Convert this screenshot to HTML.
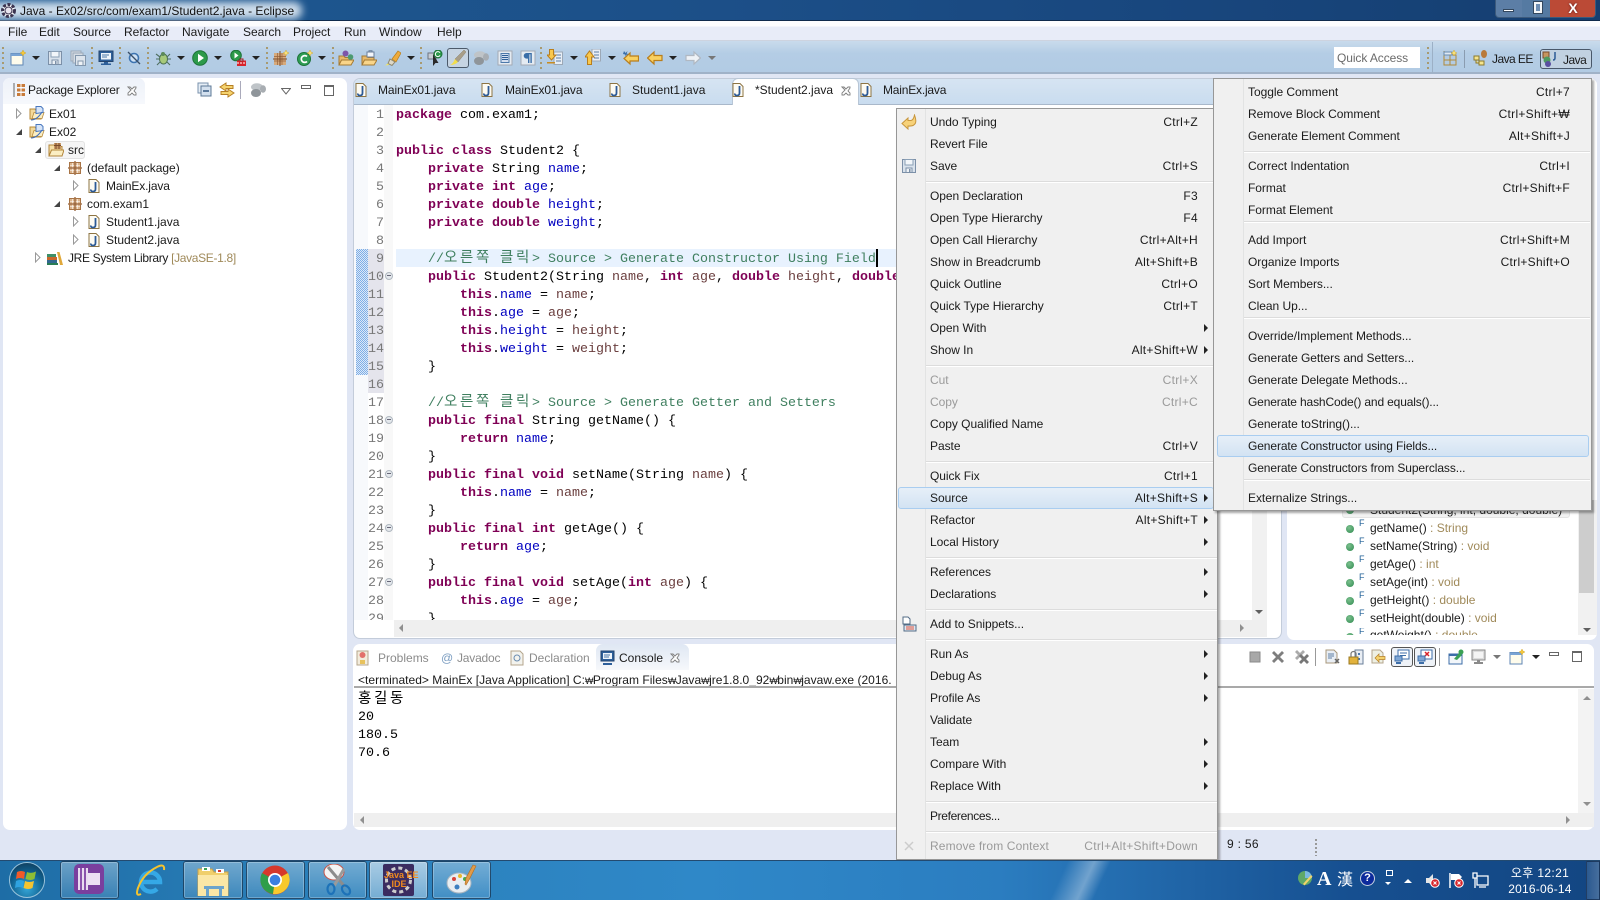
<!DOCTYPE html>
<html><head><meta charset="utf-8"><title>Java - Ex02/src/com/exam1/Student2.java - Eclipse</title>
<style>
html,body{margin:0;padding:0;width:1600px;height:900px;overflow:hidden;background:#e0e6f4}
body{position:relative;font:12px "Liberation Sans","Noto Sans CJK KR",sans-serif;color:#1a1a1a}
div,span,svg{box-sizing:border-box}
.a{position:absolute}
.t{position:absolute;white-space:nowrap;line-height:16px;height:16px}
svg.i{position:absolute;width:16px;height:16px;overflow:visible}
.dd{position:absolute;width:0;height:0;border-left:4px solid transparent;border-right:4px solid transparent;border-top:4px solid #222}
.ddg{border-top-color:#777}
.ds{position:absolute;width:2px;height:22px;top:47px;background:repeating-linear-gradient(#a89a70 0 2px,transparent 2px 5px)}
.m{position:absolute;height:22px;line-height:22px;white-space:nowrap}
.m1{left:896px;width:322px}.m2{left:1213px;width:379px}
.m span{position:absolute;left:34px;top:0;letter-spacing:-.04px}.m2 span{left:35px}
.m b{position:absolute;font-weight:normal;right:20px;top:0;letter-spacing:.28px}.m2 b{right:22px}
.m u{position:absolute;right:10px;top:7px;width:0;height:0;border-top:4px solid transparent;border-bottom:4px solid transparent;border-left:4px solid #222}
.off{color:#9a9a9a}
.hl{background:linear-gradient(#e6eff8,#d3e3f3);border:1px solid #a9cdf0;border-radius:3px;margin-top:0}
.sp{position:absolute;height:2px;background:linear-gradient(#dcdcdc 50%,#fff 50%)}
.code{position:absolute;left:396px;top:107px;width:520px;height:513px;overflow:hidden;font:13.33px/18px "Liberation Mono",monospace;color:#000}
.code div{height:18px;white-space:pre}
.num{position:absolute;left:364px;top:107px;width:20px;height:513px;overflow:hidden;font:13.33px/18px "Liberation Mono",monospace;color:#787878;text-align:right}
.num div{height:18px}
.w{color:#7f0055;font-weight:bold}.f{color:#0000c0}.l{color:#6a3e3e}.c{color:#3f7f5f}
.k{font-family:"Noto Sans CJK KR",sans-serif;font-size:14.5px;letter-spacing:2.66px;line-height:0}
.won{font-size:9px;letter-spacing:-.6px}
.fold{position:absolute;left:385px;width:8px;height:8px;border-radius:50%;background:#e4e8ec;border:1px solid #b0b8c0}
.fold:after{content:"";position:absolute;left:1px;top:2px;width:4px;height:1px;background:#667}
.tb{position:absolute;top:861px;height:38px;width:59px;border:1px solid rgba(15,45,75,.75);border-radius:3px;background:linear-gradient(rgba(255,255,255,.34),rgba(255,255,255,.1));box-shadow:inset 0 0 0 1px rgba(255,255,255,.25)}
.dot{position:absolute;left:1346px;width:8px;height:8px;border-radius:50%;background:radial-gradient(circle at 40% 35%,#7cc08e,#2f8a50)}
.F{position:absolute;left:1359px;color:#1f5f96;font-size:9px;line-height:10px}
.o{position:absolute;left:1370px;white-space:nowrap;line-height:16px}
.o em{font-style:normal;color:#a08a5a}
.g{color:#8b8b8b}
</style></head><body>
<svg width="0" height="0" style="position:absolute"><defs>
<symbol id="jf" viewBox="0 0 16 16"><path d="M3 1.500h7l3 3v10H3z" fill="#fdfbf3" stroke="#8d7443"/><path d="M9.500 4v7q0 2.500-2.500 2.500T5 11.500" fill="none" stroke="#2c5a96" stroke-width="1.800"/></symbol>
<symbol id="fo" viewBox="0 0 16 16"><path d="M1 4h5l1 1.500h5V14H1z" fill="#f3d99a" stroke="#b78a3a"/><path d="M3 13.500l2-6h10l-2 6z" fill="#fbeec3" stroke="#b78a3a" stroke-width=".8"/><path d="M7 1.500h5l2 2v4l-7 1z" fill="#d6e4f7" stroke="#4a78bf"/><path d="M2 15q6 0 11-8" fill="none" stroke="#3d6dbd" stroke-width="1.100"/></symbol>
<symbol id="pk" viewBox="0 0 16 16"><path d="M2 2h12v12H2z" fill="#dcb48c"/><path d="M2 5.500h12M2 10.500h12M5.500 2v12M10.500 2v12" stroke="#fff" stroke-width=".6"/><path d="M8 1v14M1 8h14" stroke="#96613a" stroke-width="1.300"/><path d="M2.500 2.500h11v11h-11z" fill="none" stroke="#a87446"/></symbol>
<symbol id="src" viewBox="0 0 16 16"><path d="M1 3h6l1 1.500h6V14H1z" fill="#f6dfa6" stroke="#b2853a"/><path d="M6 1h7v6H6z" fill="#c99a66"/><path d="M8 1v6M11 1v6M6 3.500h7" stroke="#7a4b2a"/><path d="M1 14l2.500-6H16l-2 6z" fill="#fbeec3" stroke="#b2853a"/></symbol>
<symbol id="jre" viewBox="0 0 16 16"><path d="M0 4h9v3H0z" fill="#3f8f68"/><path d="M0 7h10v3H0z" fill="#c9672c"/><path d="M0 10h10v3H0z" fill="#31688f"/><path d="M0 13h11v2H0z" fill="#2a7d55"/><path d="M10 2h2.500l3.500 13h-3z" fill="#e0a83a"/></symbol>
<symbol id="pe" viewBox="0 0 16 16"><path d="M3 1v14" stroke="#666"/><path d="M6 2h8v3H6zM6 6.500h8v3H6zM6 11h8v3H6z" fill="#c87b3a"/><path d="M10 2v12" stroke="#fff"/></symbol>
<symbol id="x" viewBox="0 0 12 12"><path d="M2 2l3 3-3 3v2h2l2-2 2 2h2V8L8 6l2-3V2H8L6 4 4 2z" fill="#fff" stroke="#7f7f7f" stroke-width=".9"/></symbol>
<symbol id="new" viewBox="0 0 16 16"><path d="M1 3.500h12V15H1z" fill="#fffcec" stroke="#5f86b4"/><path d="M1 3.500h12V6H1z" fill="#7aa4d4"/><path d="M13 0l1 2 2 1-2 1-1 2-1-2-2-1 2-1z" fill="#f5c83c" stroke="#c99a1c" stroke-width=".4"/></symbol>
<symbol id="save" viewBox="0 0 16 16"><path d="M1.500 1.500h13v13h-13z" fill="#d9e2ec" stroke="#7c90a8"/><path d="M4 1.500h8V7H4z" fill="#f2f6fa" stroke="#8ba0b6"/><path d="M5 10h6v4.500H5z" fill="#eef2f6" stroke="#7c90a8"/><path d="M8 11h1.500v3H8z" fill="#7c90a8"/></symbol>
<symbol id="saveall" viewBox="0 0 16 16"><path d="M1 1h10v10H1z" fill="#d5dce4" stroke="#9aa8b8"/><path d="M3 3h10v10H3z" fill="#d5dce4" stroke="#9aa8b8"/><path d="M5.500 5.500h10v10h-10z" fill="#dde4ec" stroke="#8397ad"/><path d="M8 11h5v4.500H8z" fill="#eef2f6" stroke="#8397ad"/></symbol>
<symbol id="mon" viewBox="0 0 16 16"><path d="M1 1h14v10.500H1z" fill="#2d5f9a" stroke="#23446e"/><path d="M3 3h10v6.500H3z" fill="#eef4fa"/><path d="M4 5h7M4 7h5" stroke="#4c78a8"/><path d="M6 12h4v1.500h3V15H3v-1.500h3z" fill="#2d5f9a"/></symbol>
<symbol id="skip" viewBox="0 0 16 16"><circle cx="8" cy="8" r="4.500" fill="#cfe2f5" stroke="#3e74b0" stroke-width="1.600"/><path d="M2 2l12 12" stroke="#3a4f68" stroke-width="1.300"/></symbol>
<symbol id="bug" viewBox="0 0 16 16"><ellipse cx="8.500" cy="9" rx="4" ry="5" fill="#a6c97a" stroke="#4a7050"/><circle cx="8" cy="4" r="2" fill="#5c8a5a"/><path d="M1 4l4 3M1 9h3.500M2 15l3-3M15 4l-3 3M16 9h-3.500M15 15l-3-3" stroke="#4f6f60" stroke-width="1.100"/></symbol>
<symbol id="run" viewBox="0 0 16 16"><circle cx="8" cy="8" r="7.300" fill="#2c9a4a" stroke="#1d7338"/><path d="M6 3.800l6 4.200-6 4.200z" fill="#fff"/></symbol>
<symbol id="runx" viewBox="0 0 16 16"><circle cx="6" cy="5.500" r="5.300" fill="#2c9a4a" stroke="#1d7338"/><path d="M4.500 2.500l4 3-4 3z" fill="#fff"/><path d="M7 10.500h9V16H7z" fill="#d8232a"/><path d="M10 9h3v2h-3z" fill="none" stroke="#a61a1f"/><path d="M7 13h9" stroke="#fff" stroke-dasharray="2 1"/></symbol>
<symbol id="npk" viewBox="0 0 16 16"><path d="M1 3h12v12H1z" fill="#d6aa7c"/><path d="M1 6.500h12M1 11h12M4.500 3v12M9 3v12" stroke="#96613a" stroke-width=".7"/><path d="M7 1v15M0 9h14" stroke="#7a4b2a"/><path d="M13 0l1 2 2 1-2 1-1 2-1-2-2-1 2-1z" fill="#f7e17c" stroke="#c99a1c" stroke-width=".4"/></symbol>
<symbol id="nc" viewBox="0 0 16 16"><circle cx="7" cy="9" r="6.500" fill="#2f9d54" stroke="#1d7338"/><path d="M10 6.500a3.400 3.400 0 1 0 0 5" fill="none" stroke="#fff" stroke-width="1.700"/><path d="M13 0l1 2 2 1-2 1-1 2-1-2-2-1 2-1z" fill="#f7e17c" stroke="#c99a1c" stroke-width=".4"/></symbol>
<symbol id="ot" viewBox="0 0 16 16"><path d="M1 6h5l1 1.500h6V15H1z" fill="#e8b868" stroke="#a47a34"/><path d="M1 15l2.500-5H16l-3 5z" fill="#f9d58a" stroke="#a47a34"/><circle cx="7.500" cy="3.500" r="3" fill="#7d55a8"/><circle cx="12.500" cy="7" r="2.800" fill="#4c9a70"/></symbol>
<symbol id="of" viewBox="0 0 16 16"><path d="M1 6h5l1 1.500h6V15H1z" fill="#e8b868" stroke="#a47a34"/><path d="M1 15l2.500-5H16l-3 5z" fill="#f9d58a" stroke="#a47a34"/><path d="M6 2h7v5H6z" fill="#f4f6fa" stroke="#6a7f9a"/><path d="M8 2V.800h3V2" fill="none" stroke="#6a7f9a"/></symbol>
<symbol id="srch" viewBox="0 0 16 16"><path d="M7 9l6-8 3 2-5 9z" fill="#eeab3c" stroke="#b97e1c" stroke-width=".7"/><path d="M5 9l5 3-3 3.500-4-2z" fill="#ddd8c8" stroke="#8f8870"/><path d="M0 15.500l3-2 1 1.500z" fill="#f4e85a"/></symbol>
<symbol id="pin" viewBox="0 0 16 16"><path d="M1 3h8v6H1z" fill="#c7ccd4" stroke="#6d7480"/><path d="M6 4v12l2.500-3h3z" fill="#2a2a2a"/><circle cx="11" cy="4" r="4" fill="#2c9a4a" stroke="#1d7338"/><path d="M13 2.800A2.500 2.500 0 1 0 13 5.400" fill="none" stroke="#fff"/></symbol>
<symbol id="br" viewBox="0 0 16 16"><path d="M14 0L5 9l3 3L16 2z" fill="#a89e88" stroke="#8a816c" stroke-width=".5"/><path d="M5 9l3 3q-3 3-8 3 3-1 5-6z" fill="#f2de4a"/></symbol>
<symbol id="gb" viewBox="0 0 16 16"><ellipse cx="7" cy="5" rx="6" ry="3.800" fill="#bfc4c8"/><ellipse cx="6" cy="11" rx="5" ry="4" fill="#8f959a"/><ellipse cx="13" cy="7" rx="3" ry="3.800" fill="#a8adb2"/></symbol>
<symbol id="bl" viewBox="0 0 16 16"><path d="M1 1h14v14H1z" fill="#e4ebf2" stroke="#a3aab4"/><path d="M4 3.500h8v9H4z" fill="#d4dff0" stroke="#4d79aa"/><path d="M5 5.500h6M5 7.500h6M5 9.500h6" stroke="#2f5f97"/></symbol>
<symbol id="pi" viewBox="0 0 16 16"><path d="M1 1h14v14H1z" fill="#e4ebf2" stroke="#a3aab4"/><path d="M10 3H6.500a2.800 2.800 0 0 0 0 5.600H8V13h1.400V4.200h1V13h1.400V3z" fill="#3a6ea8"/></symbol>
<symbol id="dn" viewBox="0 0 16 16"><path d="M7 3h8.500v12.500H7z" fill="#e8eef5" stroke="#9ca8b6"/><path d="M9 6h5M9 9h5M9 12h5" stroke="#5d7ea5"/><path d="M2.500.500h4V6H9L4.500 11 0 6h2.500z" fill="#f9c84c" stroke="#b97e1c"/><path d="M0 13h8v1.500H0z" fill="#c98c20"/></symbol>
<symbol id="up" viewBox="0 0 16 16"><path d="M7 0h8.500v12H7z" fill="#e8eef5" stroke="#9ca8b6"/><path d="M9 3h5M9 6h5M9 9h5" stroke="#5d7ea5"/><path d="M2.500 15.500V8H0l4.500-6L9 8H6.500v7.500z" fill="#f9c84c" stroke="#b97e1c"/></symbol>
<symbol id="lft" viewBox="0 0 16 16"><path d="M7 2v3.500h8v5H7V14L.5 8z" fill="#f9d060" stroke="#b97e1c" stroke-width="1.200"/></symbol>
<symbol id="lfs" viewBox="0 0 16 16"><path d="M7 3v3h8.500v5H7v3L1 8.500z" fill="#f9d060" stroke="#b97e1c" stroke-width="1.200"/><path d="M1 1l1.500 2L4.500 1l-.8 2.500 2 .8-2.400.4-.4 2-.8-2.200L0 4z" fill="#3a6ea8"/></symbol>
<symbol id="rgt" viewBox="0 0 16 16"><path d="M9 2v3.500H1v5h8V14l6.500-6z" fill="#eef2f6" stroke="#b0b8c2" stroke-width="1.200"/></symbol>
<symbol id="undo" viewBox="0 0 16 16"><path d="M1 9.500L7 4v2.500h3Q12.500 6 13.500 1q2 5 1 8-1.500 3.500-7.500 3v3z" fill="#f7d27a" stroke="#c8963c"/></symbol>
<symbol id="snip" viewBox="0 0 16 16"><path d="M2 1h5l2 2v5H2z" fill="#fff" stroke="#536c86"/><path d="M3 9h12v6H3z" fill="#dfe8f2" stroke="#536c86"/><path d="M5 11h8M5 13h8" stroke="#e0533f"/></symbol>
<symbol id="ql" viewBox="0 0 16 16"><path d="M2 1v14M2 5h12v10H2zM8 5v10M2 10h12" fill="none" stroke="#b08a3a"/><path d="M2 2h8v3H2z" fill="#dfe8f2" stroke="#6a8cb0"/><path d="M12 0l1 2 2 1-2 1-1 2-1-2-2-1 2-1z" fill="#f7e17c" stroke="#c99a1c" stroke-width=".4"/></symbol>
</defs></svg>

<!-- title bar -->
<div class="a" style="left:0;top:0;width:1600px;height:21px;background:linear-gradient(90deg,#1e5a92,#1c4f88 45%,#18467d 75%,#153e70);border-bottom:1px solid #0f2a4c"></div>
<div class="a" style="left:-10px;top:2px;width:312px;height:17px;background:rgba(226,236,246,.9);filter:blur(4px);border-radius:8px"></div>
<svg class="a" style="left:0;top:2px" width="17" height="17" viewBox="0 0 17 17"><circle cx="8.500" cy="8.500" r="6" fill="#fff" stroke="#3b3450" stroke-width="3" stroke-dasharray="3 1.500"/><circle cx="8.500" cy="8.500" r="3.500" fill="#e9e4ee" stroke="#3b3450"/></svg>
<div class="t" style="left:20px;top:3px;color:#111">Java - Ex02/src/com/exam1/Student2.java - Eclipse</div>
<div class="a" style="left:1495px;top:0;width:101px;height:18px;border:1px solid #3c5a7c;border-top:0;border-radius:0 0 4px 4px;background:linear-gradient(90deg,#5c7ea6 0 26px,#557aa2 26px 54px,#bb4a36 54px);overflow:hidden">
<div class="a" style="left:7px;top:9px;width:11px;height:3px;background:#fff;border:1px solid #33475e"></div>
<div class="a" style="left:38px;top:2px;width:8px;height:11px;background:#6f8fb4;border:2px solid #f4f6f8;outline:1px solid #33475e"></div>
<div class="a" style="left:54px;top:0;width:46px;height:17px;text-align:center;color:#fff;font:bold 14px/16px 'Liberation Sans',sans-serif;text-shadow:0 0 2px #511">X</div>
</div>

<!-- menu bar -->
<div class="a" style="left:0;top:21px;width:1600px;height:20px;background:linear-gradient(#fcfcfe 0 30%,#e8ecf8 30%);border-bottom:1px solid #cdd3df"></div>
<div class="t" style="left:8px;top:24px">File</div><div class="t" style="left:39px;top:24px">Edit</div><div class="t" style="left:73px;top:24px">Source</div><div class="t" style="left:124px;top:24px">Refactor</div><div class="t" style="left:182px;top:24px">Navigate</div><div class="t" style="left:243px;top:24px">Search</div><div class="t" style="left:293px;top:24px">Project</div><div class="t" style="left:344px;top:24px">Run</div><div class="t" style="left:379px;top:24px">Window</div><div class="t" style="left:437px;top:24px">Help</div>

<!-- toolbar -->
<div class="a" style="left:0;top:41px;width:1600px;height:33px;background:linear-gradient(#c9dbec,#b4cde5 40%,#b2cbe4);border-bottom:2px solid #a0b2c8"></div>
<div class="ds" style="left:2px"></div><div class="ds" style="left:91px"></div><div class="ds" style="left:119px"></div><div class="ds" style="left:147px"></div><div class="ds" style="left:266px"></div><div class="ds" style="left:332px"></div><div class="ds" style="left:420px"></div><div class="ds" style="left:540px"></div>
<svg class="i" style="left:10px;top:50px"><use href="#new"/></svg><div class="dd" style="left:32px;top:56px"></div>
<svg class="i" style="left:47px;top:50px"><use href="#save"/></svg>
<svg class="i" style="left:70px;top:50px"><use href="#saveall"/></svg>
<svg class="i" style="left:98px;top:50px"><use href="#mon"/></svg>
<svg class="i" style="left:126px;top:50px"><use href="#skip"/></svg>
<svg class="i" style="left:155px;top:50px"><use href="#bug"/></svg><div class="dd" style="left:177px;top:56px"></div>
<svg class="i" style="left:192px;top:50px"><use href="#run"/></svg><div class="dd" style="left:214px;top:56px"></div>
<svg class="i" style="left:230px;top:50px"><use href="#runx"/></svg><div class="dd" style="left:252px;top:56px"></div>
<svg class="i" style="left:273px;top:50px"><use href="#npk"/></svg>
<svg class="i" style="left:297px;top:50px"><use href="#nc"/></svg><div class="dd" style="left:318px;top:56px"></div>
<svg class="i" style="left:338px;top:50px"><use href="#ot"/></svg>
<svg class="i" style="left:361px;top:50px"><use href="#of"/></svg>
<svg class="i" style="left:385px;top:50px"><use href="#srch"/></svg><div class="dd" style="left:407px;top:56px"></div>
<svg class="i" style="left:427px;top:50px"><use href="#pin"/></svg>
<div class="a" style="left:447px;top:48px;width:22px;height:20px;background:#c6d4e2;border:1px solid #4c5a6a;border-radius:3px"></div>
<svg class="i" style="left:450px;top:50px"><use href="#br"/></svg>
<svg class="i" style="left:473px;top:50px"><use href="#gb"/></svg>
<svg class="i" style="left:497px;top:50px"><use href="#bl"/></svg>
<svg class="i" style="left:520px;top:50px"><use href="#pi"/></svg>
<svg class="i" style="left:547px;top:49px"><use href="#dn"/></svg><div class="dd" style="left:570px;top:56px"></div>
<svg class="i" style="left:585px;top:49px"><use href="#up"/></svg><div class="dd" style="left:608px;top:56px"></div>
<svg class="i" style="left:623px;top:50px"><use href="#lfs"/></svg>
<svg class="i" style="left:647px;top:50px"><use href="#lft"/></svg><div class="dd" style="left:669px;top:56px"></div>
<svg class="i" style="left:685px;top:50px"><use href="#rgt"/></svg><div class="dd ddg" style="left:708px;top:56px"></div>

<div class="a" style="left:1334px;top:47px;width:86px;height:21px;background:#fff"></div>
<div class="t" style="left:1337px;top:50px;color:#6b6b6b;letter-spacing:-.08px">Quick Access</div>
<div class="ds" style="left:1427px"></div><div class="a" style="left:1432px;top:42px;width:1px;height:31px;background:#9cb0c6"></div>
<svg class="i" style="left:1442px;top:50px"><use href="#ql"/></svg><div class="a" style="left:1464px;top:50px;width:1px;height:18px;background:#8a9cb0"></div>
<svg class="i" style="left:1473px;top:50px"><path d="M1 6h5v4H1zM6 11h5v4H6zM3 10v3h3" fill="#f5e48c" stroke="#8c7a2c"/><ellipse cx="11" cy="4" rx="3" ry="4" fill="#b9793a"/></svg>
<div class="t" style="left:1492px;top:51px;letter-spacing:-.55px">Java EE</div>
<div class="a" style="left:1540px;top:49px;width:52px;height:20px;background:#c1d1e1;border:1px solid #49586a;border-radius:3px"></div>
<svg class="i" style="left:1542px;top:51px"><path d="M1 1h6v6H1z" fill="#c7955f" stroke="#7a4b2a"/><circle cx="5" cy="9" r="3.500" fill="#4f9a60"/><circle cx="6" cy="13" r="3" fill="#5a4fa0"/><path d="M13 1v6q0 2-2 2" fill="none" stroke="#2c5a96" stroke-width="1.500"/></svg>
<div class="t" style="left:1563px;top:52px;letter-spacing:-.5px">Java</div>

<!-- package explorer -->
<div class="a" style="left:3px;top:78px;width:344px;height:752px;background:#fff;border-radius:7px"></div>
<div class="a" style="left:3px;top:78px;width:142px;height:26px;background:linear-gradient(#eef2f9,#f6f8fc);border-radius:7px 7px 0 0"></div>
<svg class="i" style="left:11px;top:82px"><use href="#pe"/></svg>
<div class="t" style="left:28px;top:82px;letter-spacing:-.2px">Package Explorer</div>
<svg class="a" style="left:126px;top:85px" width="12" height="12"><use href="#x"/></svg>
<svg class="i" style="left:197px;top:82px"><path d="M1 1h10v10H1z" fill="#e6eef6" stroke="#7a92ac"/><path d="M4 4h10v10H4z" fill="#d3e0ee" stroke="#5c7896"/><path d="M6 9h6" stroke="#2a4f78" stroke-width="1.400"/></svg>
<svg class="i" style="left:219px;top:82px"><path d="M7 1L1 5l6 4V6.500h7v-3H7zM9 7l6 4-6 4v-2.500H2v-3h7z" fill="#f5d36e" stroke="#b67f24"/></svg>
<div class="a" style="left:240px;top:81px;width:1px;height:18px;background:#aab"></div>
<svg class="i" style="left:250px;top:82px"><use href="#gb"/></svg>
<div class="a" style="left:281px;top:84px;width:10px;height:6px;"><svg width="10" height="7"><path d="M.5.500h9L5 6z" fill="#fff" stroke="#666"/></svg></div>
<div class="a" style="left:301px;top:85px;width:10px;height:4px;border:1px solid #666;background:#fff"></div>
<div class="a" style="left:324px;top:85px;width:10px;height:11px;border:1px solid #666;border-top-width:2px;background:#fff"></div>

<svg class="a" style="left:15px;top:108px" width="8" height="11"><path d="M1.500 1v9L6 5.500z" fill="#fff" stroke="#999"/></svg>
<svg class="i" style="left:29px;top:105px"><use href="#fo"/></svg><div class="t" style="left:49px;top:106px">Ex01</div>
<svg class="a" style="left:15px;top:128px" width="8" height="8"><path d="M7 1v6H1z" fill="#444"/></svg>
<svg class="i" style="left:29px;top:123px"><use href="#fo"/></svg><div class="t" style="left:49px;top:124px">Ex02</div>
<svg class="a" style="left:34px;top:146px" width="8" height="8"><path d="M7 1v6H1z" fill="#444"/></svg>
<div class="a" style="left:45px;top:141px;width:40px;height:18px;background:#f5f5f5;border:1px solid #e2e2e2;border-radius:3px"></div>
<svg class="i" style="left:48px;top:142px"><use href="#src"/></svg><div class="t" style="left:68px;top:142px">src</div>
<svg class="a" style="left:53px;top:164px" width="8" height="8"><path d="M7 1v6H1z" fill="#444"/></svg>
<svg class="i" style="left:67px;top:160px"><use href="#pk"/></svg><div class="t" style="left:87px;top:160px">(default package)</div>
<svg class="a" style="left:72px;top:180px" width="8" height="11"><path d="M1.500 1v9L6 5.500z" fill="#fff" stroke="#999"/></svg>
<svg class="i" style="left:86px;top:178px"><use href="#jf"/></svg><div class="t" style="left:106px;top:178px;letter-spacing:-.15px">MainEx.java</div>
<svg class="a" style="left:53px;top:200px" width="8" height="8"><path d="M7 1v6H1z" fill="#444"/></svg>
<svg class="i" style="left:67px;top:196px"><use href="#pk"/></svg><div class="t" style="left:87px;top:196px">com.exam1</div>
<svg class="a" style="left:72px;top:216px" width="8" height="11"><path d="M1.500 1v9L6 5.500z" fill="#fff" stroke="#999"/></svg>
<svg class="i" style="left:86px;top:214px"><use href="#jf"/></svg><div class="t" style="left:106px;top:214px">Student1.java</div>
<svg class="a" style="left:72px;top:234px" width="8" height="11"><path d="M1.500 1v9L6 5.500z" fill="#fff" stroke="#999"/></svg>
<svg class="i" style="left:86px;top:232px"><use href="#jf"/></svg><div class="t" style="left:106px;top:232px">Student2.java</div>
<svg class="a" style="left:34px;top:252px" width="8" height="11"><path d="M1.500 1v9L6 5.500z" fill="#fff" stroke="#999"/></svg>
<svg class="i" style="left:47px;top:250px"><use href="#jre"/></svg><div class="t" style="left:68px;top:250px;letter-spacing:-.33px">JRE System Library <span style="color:#a08a5a">[JavaSE-1.8]</span></div>

<!-- editor -->
<div class="a" style="left:353px;top:78px;width:929px;height:561px;background:#fff;border:1px solid #c3ccda;border-radius:7px;overflow:hidden">
<div class="a" style="left:0;top:0;width:929px;height:26px;background:linear-gradient(#d6e4f2,#c9dcef);border-bottom:1px solid #a9b8ca"></div>
</div>
<div class="a" style="left:732px;top:78px;width:127px;height:27px;background:#fff;border-radius:6px 6px 0 0;border:1px solid #b8c6d6;border-bottom:0"></div>
<svg class="i" style="left:353px;top:82px"><use href="#jf"/></svg><div class="t" style="left:378px;top:82px;letter-spacing:-.1px">MainEx01.java</div>
<svg class="i" style="left:479px;top:82px"><use href="#jf"/></svg><div class="t" style="left:505px;top:82px;letter-spacing:-.1px">MainEx01.java</div>
<svg class="i" style="left:607px;top:82px"><use href="#jf"/></svg><div class="t" style="left:632px;top:82px">Student1.java</div>
<svg class="i" style="left:730px;top:82px"><use href="#jf"/></svg><div class="t" style="left:755px;top:82px">*Student2.java</div>
<svg class="a" style="left:840px;top:85px" width="12" height="12"><use href="#x"/></svg>
<svg class="i" style="left:858px;top:82px"><use href="#jf"/></svg><div class="t" style="left:883px;top:82px;letter-spacing:-.2px">MainEx.java</div>

<div class="a" style="left:354px;top:105px;width:14px;height:515px;background:#f7f9fc"></div>
<div class="a" style="left:384px;top:105px;width:9px;height:515px;background:#f8f8f8"></div>
<div class="a" style="left:356px;top:249px;width:12px;height:126px;background:repeating-conic-gradient(#7eaee6 0 25%,#dbe8f8 0 50%) 0 0/2px 2px"></div>
<div class="a" style="left:368px;top:249px;width:16px;height:144px;background:#e4e4ec"></div>
<div class="a" style="left:396px;top:249px;width:520px;height:18px;background:#e8f2fe"></div>

<div class="num"><div>1</div><div>2</div><div>3</div><div>4</div><div>5</div><div>6</div><div>7</div><div>8</div><div>9</div><div>10</div><div>11</div><div>12</div><div>13</div><div>14</div><div>15</div><div>16</div><div>17</div><div>18</div><div>19</div><div>20</div><div>21</div><div>22</div><div>23</div><div>24</div><div>25</div><div>26</div><div>27</div><div>28</div><div>29</div></div>
<div class="fold" style="top:272px"></div><div class="fold" style="top:416px"></div><div class="fold" style="top:470px"></div><div class="fold" style="top:524px"></div><div class="fold" style="top:578px"></div>

<div class="code">
<div><span class="w">package</span> com.exam1;</div>
<div> </div>
<div><span class="w">public</span> <span class="w">class</span> Student2 {</div>
<div>    <span class="w">private</span> String <span class="f">name</span>;</div>
<div>    <span class="w">private</span> <span class="w">int</span> <span class="f">age</span>;</div>
<div>    <span class="w">private</span> <span class="w">double</span> <span class="f">height</span>;</div>
<div>    <span class="w">private</span> <span class="w">double</span> <span class="f">weight</span>;</div>
<div> </div>
<div>    <span class="c">//<span class="k">오른쪽</span> <span class="k">클릭</span>&gt; Source &gt; Generate Constructor Using Field</span></div>
<div>    <span class="w">public</span> Student2(String <span class="l">name</span>, <span class="w">int</span> <span class="l">age</span>, <span class="w">double</span> <span class="l">height</span>, <span class="w">double</span> <span class="l">weight</span>) {</div>
<div>        <span class="w">this</span>.<span class="f">name</span> = <span class="l">name</span>;</div>
<div>        <span class="w">this</span>.<span class="f">age</span> = <span class="l">age</span>;</div>
<div>        <span class="w">this</span>.<span class="f">height</span> = <span class="l">height</span>;</div>
<div>        <span class="w">this</span>.<span class="f">weight</span> = <span class="l">weight</span>;</div>
<div>    }</div>
<div> </div>
<div>    <span class="c">//<span class="k">오른쪽</span> <span class="k">클릭</span>&gt; Source &gt; Generate Getter and Setters</span></div>
<div>    <span class="w">public</span> <span class="w">final</span> String getName() {</div>
<div>        <span class="w">return</span> <span class="f">name</span>;</div>
<div>    }</div>
<div>    <span class="w">public</span> <span class="w">final</span> <span class="w">void</span> setName(String <span class="l">name</span>) {</div>
<div>        <span class="w">this</span>.<span class="f">name</span> = <span class="l">name</span>;</div>
<div>    }</div>
<div>    <span class="w">public</span> <span class="w">final</span> <span class="w">int</span> getAge() {</div>
<div>        <span class="w">return</span> <span class="f">age</span>;</div>
<div>    }</div>
<div>    <span class="w">public</span> <span class="w">final</span> <span class="w">void</span> setAge(<span class="w">int</span> <span class="l">age</span>) {</div>
<div>        <span class="w">this</span>.<span class="f">age</span> = <span class="l">age</span>;</div>
<div>    }</div>
</div>
<div class="a" style="left:876px;top:249px;width:2px;height:18px;background:#000"></div>

<!-- editor scrollbars -->
<div class="a" style="left:1252px;top:105px;width:15px;height:515px;background:#f1f1f1"></div>
<div class="a" style="left:1255px;top:610px;width:0;height:0;border-left:4px solid transparent;border-right:4px solid transparent;border-top:4px solid #606060"></div>
<div class="a" style="left:394px;top:620px;width:873px;height:17px;background:#efefef"></div>
<div class="a" style="left:399px;top:624px;width:0;height:0;border-top:4px solid transparent;border-bottom:4px solid transparent;border-right:4px solid #909090"></div>
<div class="a" style="left:1240px;top:624px;width:0;height:0;border-top:4px solid transparent;border-bottom:4px solid transparent;border-left:4px solid #909090"></div>

<!-- outline -->
<div class="a" style="left:1287px;top:78px;width:310px;height:562px;background:#fff;border-radius:7px"></div>
<div class="a" style="left:1342px;top:500px;width:228px;height:18px;background:#f2f2f2;border:1px solid #e4e4e4;border-radius:3px"></div>
<div class="dot" style="top:506px"></div><div class="o" style="top:502px">Student2(String, int, double, double)</div>
<div class="dot" style="top:525px"></div><div class="F" style="top:518px">F</div><div class="o" style="top:520px">getName() <em>: String</em></div>
<div class="dot" style="top:543px"></div><div class="F" style="top:536px">F</div><div class="o" style="top:538px">setName(String) <em>: void</em></div>
<div class="dot" style="top:561px"></div><div class="F" style="top:554px">F</div><div class="o" style="top:556px">getAge() <em>: int</em></div>
<div class="dot" style="top:579px"></div><div class="F" style="top:572px">F</div><div class="o" style="top:574px">setAge(int) <em>: void</em></div>
<div class="dot" style="top:597px"></div><div class="F" style="top:590px">F</div><div class="o" style="top:592px">getHeight() <em>: double</em></div>
<div class="dot" style="top:615px"></div><div class="F" style="top:608px">F</div><div class="o" style="top:610px">setHeight(double) <em>: void</em></div>
<div class="a" style="left:1340px;top:628px;width:230px;height:7px;overflow:hidden"><div class="dot" style="left:6px;top:5px"></div><div class="F" style="left:19px;top:-2px">F</div><div class="o" style="left:30px;top:-1px;">getWeight() <em>: double</em></div></div>
<div class="a" style="left:1578px;top:500px;width:19px;height:135px;background:#f1f1f1"></div>
<div class="a" style="left:1579px;top:500px;width:15px;height:93px;background:#cdcdcd"></div>
<div class="a" style="left:1583px;top:628px;width:0;height:0;border-left:4px solid transparent;border-right:4px solid transparent;border-top:4px solid #606060"></div>

<!-- console -->
<div class="a" style="left:353px;top:644px;width:1241px;height:186px;background:#fff;border-radius:7px"></div>
<div class="a" style="left:596px;top:644px;width:93px;height:26px;background:linear-gradient(#dfe7f3,#f6f8fb);border-radius:7px 7px 0 0"></div>
<svg class="i" style="left:355px;top:650px"><path d="M2 1h11v14H2z" fill="#f3ecdc" stroke="#b4a68c"/><circle cx="7.500" cy="5" r="3" fill="#e2706a"/><path d="M5 10h5v4H5z" fill="#e8c25c"/></svg>
<div class="t g" style="left:378px;top:650px">Problems</div>
<div class="t" style="left:441px;top:650px;color:#7a9cc0">@</div>
<div class="t g" style="left:457px;top:650px;letter-spacing:-.2px">Javadoc</div>
<svg class="i" style="left:509px;top:650px"><path d="M2 1h9l3 3v11H2z" fill="#f3f3ee" stroke="#b4a68c"/><circle cx="8" cy="8" r="3" fill="none" stroke="#6a8cb0"/></svg>
<div class="t g" style="left:529px;top:650px">Declaration</div>
<svg class="i" style="left:600px;top:650px"><path d="M1 1h13v10H1z" fill="#2d5f9a" stroke="#23446e"/><path d="M3 3h9v6H3z" fill="#eef4fa"/><path d="M4 5h6M4 7h5" stroke="#4c78a8"/><path d="M3 13h9v2H3z" fill="#2d5f9a"/></svg>
<div class="t" style="left:619px;top:650px">Console</div>
<svg class="a" style="left:669px;top:652px" width="12" height="12"><use href="#x"/></svg>

<div class="t" style="left:358px;top:672px;letter-spacing:.02px">&lt;terminated&gt; MainEx [Java Application] C:<span class="won">₩</span>Program Files<span class="won">₩</span>Java<span class="won">₩</span>jre1.8.0_92<span class="won">₩</span>bin<span class="won">₩</span>javaw.exe (2016.</div>
<div class="a" style="left:354px;top:686px;width:1240px;height:2px;background:#a9a9a9"></div>
<div class="a" style="left:358px;top:689px;font:13.33px/18px 'Liberation Mono',monospace;white-space:pre;color:#000"><div style="height:18px;position:relative;top:3px"><span class="k">홍길동</span></div><div style="height:18px;margin-top:2px">20</div><div style="height:18px">180.5</div><div style="height:18px">70.6</div></div>

<!-- console toolbar -->
<svg class="i" style="left:1247px;top:649px"><path d="M3 3h10v10H3z" fill="#a8a8a8" stroke="#8a8a8a"/></svg>
<svg class="i" style="left:1270px;top:649px"><path d="M2 4l2-2 4 4 4-4 2 2-4 4 4 4-2 2-4-4-4 4-2-2 4-4z" fill="#7e7e7e"/></svg>
<svg class="i" style="left:1294px;top:649px"><path d="M1 3l2-2 3 3 3-3 2 2-3 3 3 3-2 2-3-3-3 3-2-2 3-3z" fill="#ababab"/><path d="M5 7l2-2 3 3 3-3 2 2-3 3 3 3-2 2-3-3-3 3-2-2 3-3z" fill="#777"/></svg>
<div class="a" style="left:1315px;top:648px;width:1px;height:18px;background:#999"></div>
<svg class="i" style="left:1324px;top:649px"><path d="M2 1h8l3 3v10H2z" fill="#e9eef4" stroke="#a8977a"/><path d="M4 5h6M4 7h6M4 9h4" stroke="#5d7ea5"/><path d="M11 10l4 4m0-4l-4 4" stroke="#666" stroke-width="1.500"/></svg>
<svg class="i" style="left:1348px;top:649px"><path d="M7 1h8v14H7z" fill="#e9eef4" stroke="#6a7f9a"/><path d="M10 4h2v2h-2zM10 9h2v2h-2z" fill="#4a78b0"/><path d="M1 8h9v7H1z" fill="#e2b23c" stroke="#9b7a20"/><path d="M3 8V5a2.500 2.500 0 0 1 5 0v3" fill="none" stroke="#777" stroke-width="1.200"/></svg>
<svg class="i" style="left:1370px;top:649px"><path d="M2 1h8l3 3v10H2z" fill="#eef0e4" stroke="#b4a68c"/><path d="M5 9l4-4v2.500h6v3H9V13z" fill="#f5d36e" stroke="#b67f24" stroke-width=".7"/></svg>
<div class="a" style="left:1391px;top:647px;width:22px;height:20px;background:#eef2f7;border:1px solid #555;border-radius:3px"></div>
<svg class="i" style="left:1394px;top:649px"><path d="M4 1h11v9H4z" fill="#fff" stroke="#3d6ea8"/><path d="M6 4h7M6 6.500h6" stroke="#3d6ea8"/><path d="M1 7h7v5H1z" fill="#7ea6d4" stroke="#3d6ea8"/><path d="M2 13h5v2H2z" fill="#3d6ea8"/></svg>
<div class="a" style="left:1414px;top:647px;width:22px;height:20px;background:#eef2f7;border:1px solid #555;border-radius:3px"></div>
<svg class="i" style="left:1417px;top:649px"><path d="M4 1h11v9H4z" fill="#fff" stroke="#3d6ea8"/><path d="M8 3l4 4m0-4L8 7" stroke="#d8232a" stroke-width="1.500"/><path d="M1 7h7v5H1z" fill="#7ea6d4" stroke="#3d6ea8"/><path d="M2 13h5v2H2z" fill="#3d6ea8"/></svg>
<div class="a" style="left:1439px;top:648px;width:1px;height:18px;background:#999"></div>
<svg class="i" style="left:1448px;top:649px"><path d="M1 5h13v10H1z" fill="#f2f6fa" stroke="#3d6ea8"/><path d="M1 5h13v2H1z" fill="#3d6ea8"/><path d="M6 10l5-6 3 2-5 5z" fill="#3aa055"/><circle cx="13" cy="3" r="2.500" fill="#3aa055"/></svg>
<svg class="i" style="left:1471px;top:649px"><path d="M1 1h13v10H1z" fill="#dcdcdc" stroke="#8a8a8a"/><path d="M3 3h9v6H3z" fill="#f4f4f4"/><path d="M6 11h3v2h3v2H3v-2h3z" fill="#8a8a8a"/></svg>
<div class="dd ddg" style="left:1493px;top:655px"></div>
<svg class="i" style="left:1509px;top:649px"><use href="#new"/></svg>
<div class="dd" style="left:1532px;top:655px"></div>
<div class="a" style="left:1549px;top:652px;width:10px;height:4px;border:1px solid #666;background:#fff"></div>
<div class="a" style="left:1572px;top:651px;width:10px;height:11px;border:1px solid #666;border-top-width:2px;background:#fff"></div>

<!-- console scrollbars -->
<div class="a" style="left:1578px;top:689px;width:16px;height:138px;background:#f3f3f3"></div>
<div class="a" style="left:1583px;top:696px;width:0;height:0;border-left:4px solid transparent;border-right:4px solid transparent;border-bottom:4px solid #909090"></div>
<div class="a" style="left:1583px;top:802px;width:0;height:0;border-left:4px solid transparent;border-right:4px solid transparent;border-top:4px solid #909090"></div>
<div class="a" style="left:354px;top:813px;width:1240px;height:14px;background:#efefef"></div>
<div class="a" style="left:360px;top:816px;width:0;height:0;border-top:4px solid transparent;border-bottom:4px solid transparent;border-right:4px solid #909090"></div>
<div class="a" style="left:1566px;top:816px;width:0;height:0;border-top:4px solid transparent;border-bottom:4px solid transparent;border-left:4px solid #909090"></div>

<!-- status -->
<div class="t" style="left:1227px;top:836px;letter-spacing:.3px">9 : 56</div>
<div class="a" style="left:1315px;top:839px;width:2px;height:17px;background:repeating-linear-gradient(#999 0 2px,transparent 2px 4px)"></div>

<!-- context menu 1 -->
<div class="a" style="left:896px;top:108px;width:322px;height:752px;background:#f0f0f0;border:1px solid #979797;box-shadow:2px 2px 2px rgba(60,60,60,.45)"></div>
<div class="a" style="left:925px;top:109px;width:1px;height:750px;background:#e2e3e3"></div>
<div class="a hl" style="left:898px;top:487px;width:316px;height:22px"></div>
<div class="sp" style="left:926px;top:181px;width:291px"></div><div class="sp" style="left:926px;top:365px;width:291px"></div><div class="sp" style="left:926px;top:461px;width:291px"></div><div class="sp" style="left:926px;top:557px;width:291px"></div><div class="sp" style="left:926px;top:609px;width:291px"></div><div class="sp" style="left:926px;top:639px;width:291px"></div><div class="sp" style="left:926px;top:801px;width:291px"></div><div class="sp" style="left:926px;top:831px;width:291px"></div>
<svg class="i" style="left:901px;top:114px"><use href="#undo"/></svg>
<svg class="i" style="left:901px;top:158px"><use href="#save"/></svg>
<svg class="i" style="left:901px;top:616px"><use href="#snip"/></svg>
<svg class="i" style="left:901px;top:838px;opacity:.25"><path d="M4 4l8 8M12 4l-8 8" stroke="#666" stroke-width="1.500"/></svg>
<div class="m m1" style="top:111px"><span>Undo Typing</span><b>Ctrl+Z</b></div>
<div class="m m1" style="top:133px"><span>Revert File</span></div>
<div class="m m1" style="top:155px"><span>Save</span><b>Ctrl+S</b></div>
<div class="m m1" style="top:185px"><span>Open Declaration</span><b>F3</b></div>
<div class="m m1" style="top:207px"><span>Open Type Hierarchy</span><b>F4</b></div>
<div class="m m1" style="top:229px"><span>Open Call Hierarchy</span><b>Ctrl+Alt+H</b></div>
<div class="m m1" style="top:251px"><span>Show in Breadcrumb</span><b>Alt+Shift+B</b></div>
<div class="m m1" style="top:273px"><span>Quick Outline</span><b>Ctrl+O</b></div>
<div class="m m1" style="top:295px"><span>Quick Type Hierarchy</span><b>Ctrl+T</b></div>
<div class="m m1" style="top:317px"><span>Open With</span><u></u></div>
<div class="m m1" style="top:339px"><span>Show In</span><b>Alt+Shift+W</b><u></u></div>
<div class="m m1 off" style="top:369px"><span>Cut</span><b>Ctrl+X</b></div>
<div class="m m1 off" style="top:391px"><span>Copy</span><b>Ctrl+C</b></div>
<div class="m m1" style="top:413px"><span>Copy Qualified Name</span></div>
<div class="m m1" style="top:435px"><span>Paste</span><b>Ctrl+V</b></div>
<div class="m m1" style="top:465px"><span>Quick Fix</span><b>Ctrl+1</b></div>
<div class="m m1" style="top:487px"><span>Source</span><b>Alt+Shift+S</b><u></u></div>
<div class="m m1" style="top:509px"><span>Refactor</span><b>Alt+Shift+T</b><u></u></div>
<div class="m m1" style="top:531px"><span>Local History</span><u></u></div>
<div class="m m1" style="top:561px"><span>References</span><u></u></div>
<div class="m m1" style="top:583px"><span>Declarations</span><u></u></div>
<div class="m m1" style="top:613px"><span>Add to Snippets...</span></div>
<div class="m m1" style="top:643px"><span>Run As</span><u></u></div>
<div class="m m1" style="top:665px"><span>Debug As</span><u></u></div>
<div class="m m1" style="top:687px"><span>Profile As</span><u></u></div>
<div class="m m1" style="top:709px"><span>Validate</span></div>
<div class="m m1" style="top:731px"><span>Team</span><u></u></div>
<div class="m m1" style="top:753px"><span>Compare With</span><u></u></div>
<div class="m m1" style="top:775px"><span>Replace With</span><u></u></div>
<div class="m m1" style="top:805px"><span style="letter-spacing:-.35px">Preferences...</span></div>
<div class="m m1 off" style="top:835px"><span style="letter-spacing:.12px">Remove from Context</span><b>Ctrl+Alt+Shift+Down</b></div>

<!-- context menu 2 -->
<div class="a" style="left:1213px;top:78px;width:379px;height:433px;background:#f0f0f0;border:1px solid #979797;box-shadow:2px 2px 2px rgba(60,60,60,.45)"></div>
<div class="a" style="left:1243px;top:79px;width:1px;height:431px;background:#e2e3e3"></div>
<div class="a hl" style="left:1217px;top:435px;width:372px;height:22px"></div>
<div class="sp" style="left:1244px;top:151px;width:346px"></div><div class="sp" style="left:1244px;top:221px;width:346px"></div><div class="sp" style="left:1244px;top:317px;width:346px"></div><div class="sp" style="left:1244px;top:479px;width:346px"></div>
<div class="m m2" style="top:81px"><span>Toggle Comment</span><b>Ctrl+7</b></div>
<div class="m m2" style="top:103px"><span>Remove Block Comment</span><b>Ctrl+Shift+₩</b></div>
<div class="m m2" style="top:125px"><span>Generate Element Comment</span><b>Alt+Shift+J</b></div>
<div class="m m2" style="top:155px"><span>Correct Indentation</span><b>Ctrl+I</b></div>
<div class="m m2" style="top:177px"><span>Format</span><b>Ctrl+Shift+F</b></div>
<div class="m m2" style="top:199px"><span>Format Element</span></div>
<div class="m m2" style="top:229px"><span>Add Import</span><b>Ctrl+Shift+M</b></div>
<div class="m m2" style="top:251px"><span>Organize Imports</span><b>Ctrl+Shift+O</b></div>
<div class="m m2" style="top:273px"><span>Sort Members...</span></div>
<div class="m m2" style="top:295px"><span>Clean Up...</span></div>
<div class="m m2" style="top:325px"><span>Override/Implement Methods...</span></div>
<div class="m m2" style="top:347px"><span>Generate Getters and Setters...</span></div>
<div class="m m2" style="top:369px"><span>Generate Delegate Methods...</span></div>
<div class="m m2" style="top:391px"><span style="letter-spacing:-.15px">Generate hashCode() and equals()...</span></div>
<div class="m m2" style="top:413px"><span>Generate toString()...</span></div>
<div class="m m2" style="top:435px"><span style="letter-spacing:-.1px">Generate Constructor using Fields...</span></div>
<div class="m m2" style="top:457px"><span style="letter-spacing:-.1px">Generate Constructors from Superclass...</span></div>
<div class="m m2" style="top:487px"><span>Externalize Strings...</span></div>

<!-- taskbar -->
<div class="a" style="left:0;top:860px;width:1600px;height:40px;background:linear-gradient(90deg,#1e6da6 0,#2a7fb9 300px,#2f88c8 700px,#2b7dc0 1000px,#1f62a4 1200px,#164f90 1350px,#134682 1600px);border-top:1px solid #234a70"></div>
<div class="a" style="left:1030px;top:861px;width:90px;height:39px;background:linear-gradient(115deg,transparent 35%,rgba(255,255,255,.35) 60%,transparent 75%)"></div>
<div class="a" style="left:9px;top:862px;width:36px;height:36px;border-radius:50%;background:radial-gradient(circle at 50% 75%,#35a6d8,#0f5f8d 55%,#12314a);border:1px solid #9ac4dc"></div>
<svg class="a" style="left:15px;top:869px" width="24" height="22"><path d="M2 3q4-2 8 0l-1 7q-4-2-8 0z" fill="#f25a28"/><path d="M12 3q4 2 9-.5l-1.500 7.500q-4 2-9 0z" fill="#8dbe35"/><path d="M1 12q4-2 8 0l-1 7q-4-2-8 0z" fill="#2fa3e0"/><path d="M10 12q4 2 9 0l-1.500 7q-4 2-9 0z" fill="#f5c431"/></svg>

<div class="tb" style="left:60px"></div>
<div class="a" style="left:74px;top:864px;width:30px;height:30px;border-radius:5px;background:#7a3f9e"></div>
<div class="a" style="left:78px;top:868px;width:10px;height:22px;background:repeating-linear-gradient(90deg,#e9dcf0 0 2px,#8a52ac 2px 4px)"></div>
<div class="a" style="left:88px;top:873px;width:12px;height:12px;background:#ecdff3"></div>
<svg class="a" style="left:135px;top:862px" width="32" height="36" viewBox="0 0 32 36"><path d="M6.500 20h18.500a9.500 9.500 0 1 0-3 7" fill="none" stroke="#35a8e6" stroke-width="4.500"/><path d="M6 32Q0 35 3 26 8 12 22 5q8-4 7 3" fill="none" stroke="#f5c32e" stroke-width="2"/></svg>
<div class="tb" style="left:183px;width:60px"></div>
<svg class="a" style="left:196px;top:866px" width="34" height="30"><path d="M2 3h14l2 3h14v24H2z" fill="#f0cf6c" stroke="#caa04a"/><path d="M6 1h8v4H6zM20 3h8v4h-8z" fill="#fff"/><path d="M8 2h3v2H8z" fill="#3aa055"/><path d="M22 4h3v2h-3z" fill="#d8332a"/><path d="M2 9h30v21H2z" fill="#fbe7a6"/><path d="M8 20h20v3H8zM10 23h3v7h-3zM23 23h3v7h-3z" fill="#6ca4cc"/></svg>
<div class="tb" style="left:246px"></div>
<svg class="a" style="left:260px;top:865px" width="30" height="30" viewBox="0 0 30 30"><circle cx="15" cy="15" r="14.500" fill="#d6382c"/><path d="M15 15L2 8A14.500 14.500 0 0 0 13 29z" fill="#2f9e4a"/><path d="M15 15L28 8A14.500 14.500 0 0 1 13 29z" fill="#f8c92c"/><circle cx="15" cy="15" r="7" fill="#fff"/><circle cx="15" cy="15" r="5.300" fill="#3c7fe0"/></svg>
<div class="tb" style="left:308px"></div>
<svg class="a" style="left:322px;top:864px" width="30" height="32" viewBox="0 0 30 32"><ellipse cx="12" cy="8" rx="10" ry="8" fill="#f4f4f4" stroke="#c4554a"/><path d="M6 3l17 20" stroke="#8c8c8c" stroke-width="3"/><path d="M22 5L12 22" stroke="#9a9a9a" stroke-width="3"/><ellipse cx="9" cy="25" rx="3.500" ry="5" fill="none" stroke="#1d72b8" stroke-width="2.200"/><ellipse cx="24" cy="26" rx="3.500" ry="5" fill="none" stroke="#1d72b8" stroke-width="2.200" transform="rotate(-35 24 26)"/></svg>
<div class="tb" style="left:369px;background:linear-gradient(rgba(255,255,255,.6),rgba(255,255,255,.35))"></div>
<div class="a" style="left:383px;top:864px;width:31px;height:32px;background:#3b2c60;border-radius:2px"></div>
<svg class="a" style="left:383px;top:864px" width="31" height="32"><circle cx="15.500" cy="16" r="12" fill="none" stroke="#ccc" stroke-width="3" stroke-dasharray="4 3"/></svg>
<div class="a" style="left:384px;top:871px;width:30px;text-align:center;color:#f08a1e;font:bold 9px/9px 'Liberation Sans',sans-serif;white-space:nowrap">Java EE<br>IDE</div>
<div class="tb" style="left:432px"></div>
<svg class="a" style="left:446px;top:864px" width="32" height="32" viewBox="0 0 32 32"><ellipse cx="13" cy="19" rx="12" ry="10" fill="#e8eef2" stroke="#aab6c0"/><circle cx="8" cy="15" r="2" fill="#d8443a"/><circle cx="14" cy="12" r="2" fill="#e8b82e"/><circle cx="19" cy="15" r="2" fill="#46a84e"/><circle cx="11" cy="23" r="2.500" fill="#3c7fc0"/><path d="M27 1l3 1-7 14-3 5-1-1 1-6z" fill="#e09a4a" stroke="#b26e22" stroke-width=".6"/></svg>

<!-- tray -->
<svg class="i" style="left:1297px;top:870px"><circle cx="8" cy="8" r="7" fill="#5fa868"/><path d="M8 1a7 7 0 0 1 7 7H8z" fill="#7ab8e0"/><path d="M6 14L14 5l1.500 1.500-8 9z" fill="#f0d36a"/></svg>
<div class="t" style="left:1317px;top:869px;height:20px;color:#fff;font:bold 20px/20px 'Liberation Serif',serif">A</div>
<div class="t" style="left:1337px;top:870px;color:#fff;font:16px/16px 'Noto Sans CJK KR',sans-serif">漢</div>
<div class="a" style="left:1360px;top:871px;width:15px;height:15px;border-radius:50%;background:#0c2a9c;border:1px solid #c8d2e0;color:#fff;font:bold 11px/13px 'Liberation Sans',sans-serif;text-align:center">?</div>
<div class="a" style="left:1386px;top:870px;width:7px;height:6px;border:1px solid #fff"></div>
<div class="a" style="left:1385px;top:882px;width:0;height:0;border-left:3px solid transparent;border-right:3px solid transparent;border-top:3px solid #fff"></div>
<div class="a" style="left:1404px;top:879px;width:0;height:0;border-left:4px solid transparent;border-right:4px solid transparent;border-bottom:4px solid #fff"></div>
<svg class="i" style="left:1425px;top:873px"><path d="M1 5h3l4-4v13l-4-4H1z" fill="#e6e6e6"/><circle cx="10" cy="10" r="4.300" fill="#d8262c" stroke="#fff"/><path d="M8.500 8.500l3 3m0-3l-3 3" stroke="#fff"/></svg>
<svg class="i" style="left:1449px;top:873px"><path d="M1 0v15" stroke="#fff" stroke-width="1.500"/><path d="M2 1h8l3 3-3 3H2z" fill="#fff"/><circle cx="10" cy="10" r="4.300" fill="#d8262c" stroke="#fff"/><path d="M8.500 8.500l3 3m0-3l-3 3" stroke="#fff"/></svg>
<svg class="i" style="left:1473px;top:873px"><path d="M0 0h4v5H0zM2 5v10M4 3h11v9H4zM6 14h7" fill="none" stroke="#fff" stroke-width="1.300"/></svg>
<div class="t" style="left:1510px;top:865px;width:60px;text-align:center;color:#fff;letter-spacing:.35px">오후 12:21</div>
<div class="t" style="left:1507px;top:881px;width:66px;text-align:center;color:#fff;letter-spacing:.2px">2016-06-14</div>
<div class="a" style="left:1586px;top:861px;width:14px;height:39px;background:linear-gradient(90deg,rgba(255,255,255,.1),rgba(255,255,255,.22));border:1px solid rgba(10,30,60,.6)"></div>
</body></html>
